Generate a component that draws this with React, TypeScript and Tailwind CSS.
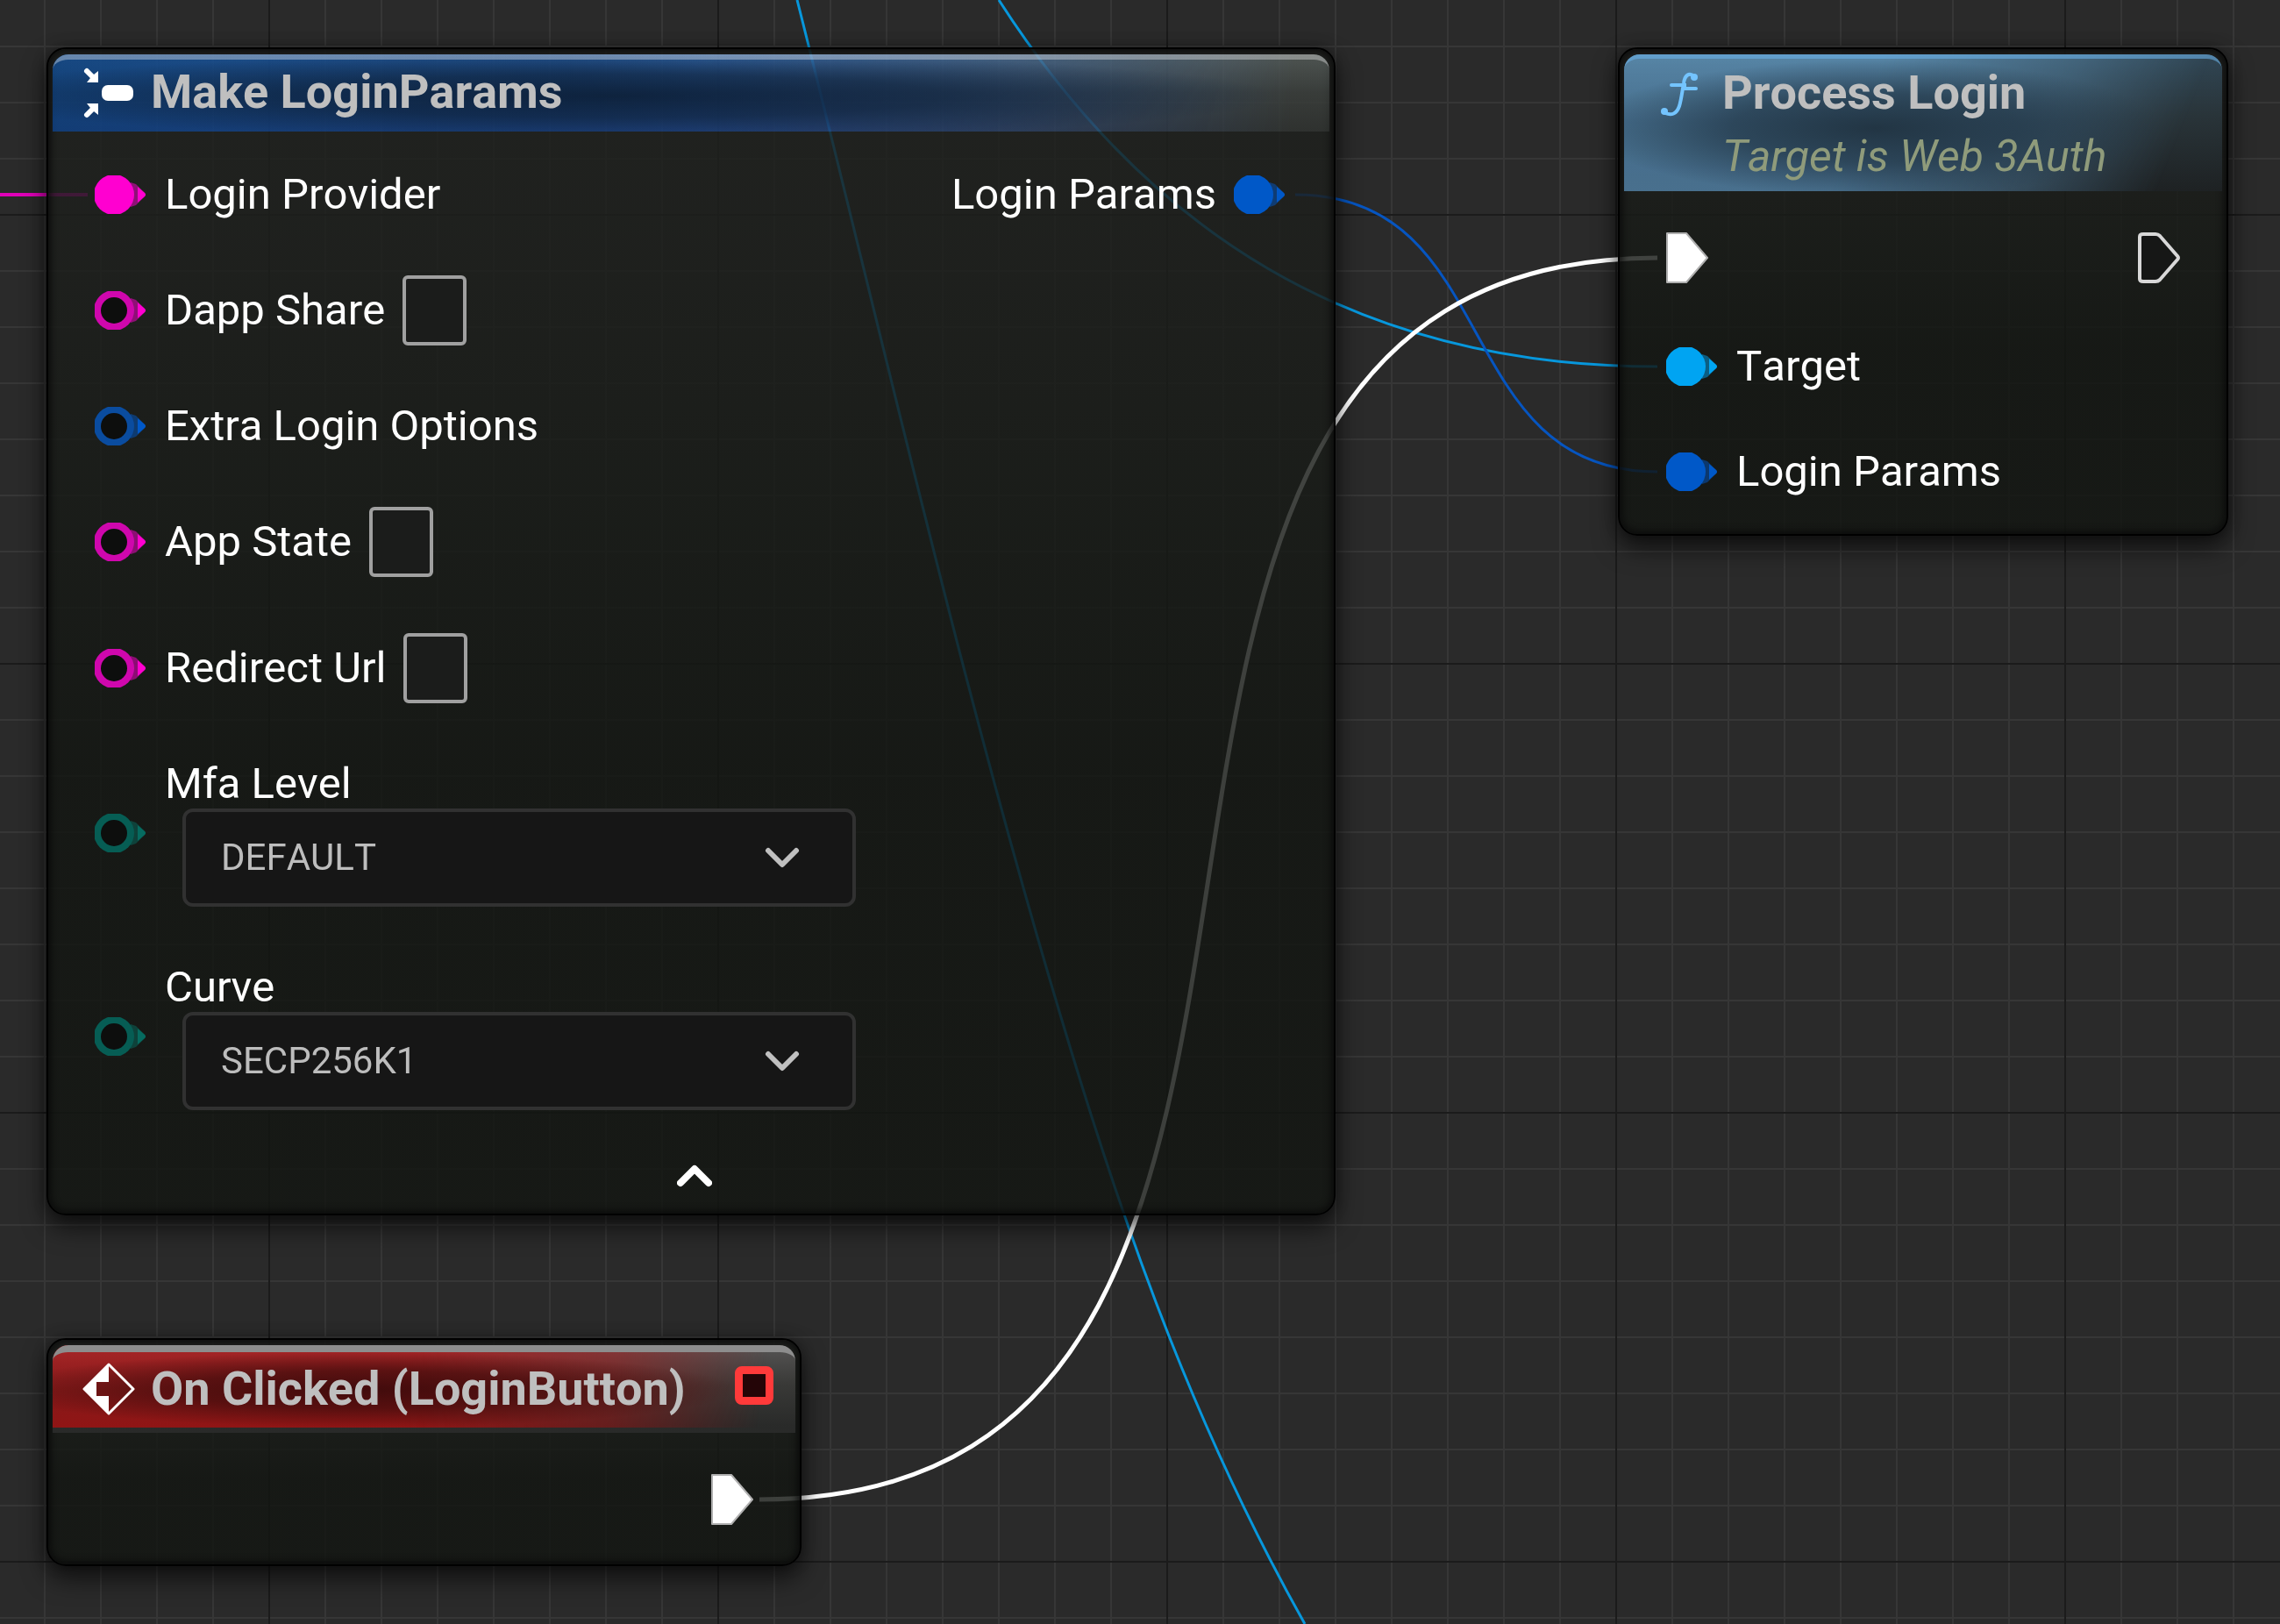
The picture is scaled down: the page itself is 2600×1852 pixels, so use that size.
import React from "react";

type PinColor = "magenta" | "blue" | "cyan" | "teal";

const PIN_HEX: Record<PinColor, string> = {
  magenta: "#ff00d0",
  blue: "#0058c8",
  cyan: "#00a4f2",
  teal: "#066b60",
};

const RING_HEX: Record<PinColor, string> = {
  magenta: "#cf07ad",
  blue: "#0a4c9f",
  cyan: "#008fd6",
  teal: "#065d54",
};

function DataPin({ color, filled = false }: { color: PinColor; filled?: boolean }) {
  const hex = PIN_HEX[color];
  const ring = RING_HEX[color];
  return (
    <svg className="h-11 w-[60px] shrink-0" viewBox="0 0 60 44" aria-hidden="true">
      <path d="M41 8 L47 10 L57 20 Q59 22 57 24 L47 34 L41 36 Z" fill={hex} opacity="0.5" />
      <path d="M49 13 L57 20 Q59 22 57 24 L49 31 Z" fill={hex} />
      {filled ? (
        <circle cx="22" cy="22" r="23" fill={hex} />
      ) : (
        <>
          <circle cx="22" cy="22" r="23" fill={ring} />
          <circle cx="22" cy="22" r="15" fill="#0d0e0d" />
        </>
      )}
    </svg>
  );
}

function ExecPin({ filled = false }: { filled?: boolean }) {
  return (
    <svg className="h-[60px] w-12 shrink-0" viewBox="0 0 48 60" aria-hidden="true">
      {filled ? (
        <path d="M1 2 H23 L47 30 L23 58 H1 Z" fill="#ffffff" stroke="#b0b0b0" strokeWidth="2" strokeLinejoin="round" />
      ) : (
        <path
          d="M2 6 Q2 3 6 3 H20 Q23 3 25 5 L45 28 Q47 30 45 32 L25 55 Q23 57 20 57 H6 Q2 57 2 54 Z"
          fill="#161716"
          stroke="#d8d8d8"
          strokeWidth="4"
        />
      )}
    </svg>
  );
}

function MakeStructIcon() {
  return (
    <svg className="relative h-[60px] w-[60px] shrink-0" viewBox="0 0 60 60" fill="#ffffff" aria-hidden="true">
      <g stroke="#ffffff" strokeWidth="6" strokeLinecap="round">
        <path d="M5 6 L12 13" />
        <path d="M5 56 L12 49" />
      </g>
      <path d="M18 6 V19 H5 L9 14 L13 10 Z" />
      <path d="M18 56 V43 H5 L9 48 L13 52 Z" />
      <rect x="22" y="22" width="36" height="18" rx="7" />
    </svg>
  );
}

function EventIcon() {
  return (
    <svg className="relative h-[60px] w-[60px] shrink-0" viewBox="0 0 60 60" aria-hidden="true">
      <path d="M30 2 L58 30 L30 58 L2 30 Z" fill="none" stroke="#ffffff" strokeWidth="3" strokeLinejoin="round" />
      <path d="M30 2 V22 H16 V38 H30 V58 L2 30 Z" fill="#ffffff" />
    </svg>
  );
}

function FunctionIcon() {
  return (
    <svg className="h-[52px] w-[42px] shrink-0" viewBox="0 0 42 52" aria-hidden="true">
      <g fill="none" stroke="#74c4ff" strokeLinecap="round">
        <path d="M38 5 C32 0 27 4 26 13 C24 24 23 33 21 39 C18 48 12 50 5 47" strokeWidth="4" />
        <path d="M12 15 H27 V19 H40" strokeWidth="4" />
      </g>
      <circle cx="38" cy="6" r="4" fill="#74c4ff" />
      <circle cx="4" cy="45" r="4" fill="#74c4ff" />
    </svg>
  );
}

function Chevron({ className, up = false }: { className: string; up?: boolean }) {
  return (
    <svg className={className} viewBox="0 0 40 26" fill="none" stroke="currentColor" strokeLinecap="round" strokeLinejoin="round" aria-hidden="true">
      <path d={up ? "M4 21 L20 5 L36 21" : "M4 4 L20 20 L36 4"} strokeWidth={up ? 8 : 6} />
    </svg>
  );
}

function NodeFrame({ className, children }: { className: string; children: React.ReactNode }) {
  return (
    <section
      className={`absolute flex flex-col rounded-[22px] border-2 border-black bg-[linear-gradient(to_bottom,rgba(31,33,30,0.83)_0%,rgba(28,30,27,0.82)_17%,rgba(23,26,22,0.82)_38%,rgba(18,21,17,0.82)_62%)] px-[5px] pt-1.5 shadow-[0_14px_28px_rgba(0,0,0,0.6),0_0_16px_rgba(0,0,0,0.3),inset_0_0_7px_4px_rgba(8,8,8,0.7)] ${className}`}
    >
      {children}
    </section>
  );
}

function TextPin({ id, label }: { id: string; label: string }) {
  return (
    <div className="flex h-20 items-center gap-5">
      <DataPin color="magenta" />
      <div className="flex items-center gap-5">
        <label htmlFor={id}>{label}</label>
        <input id={id} type="text" className="h-20 w-[73px] rounded-md border-4 border-[#a0a0a0] bg-[#1b1c1b] px-2 text-[40px] text-[#c0c0c0] outline-none" />
      </div>
    </div>
  );
}

function SelectPin({ id, label, options }: { id: string; label: string; options: string[] }) {
  return (
    <div className="flex items-center gap-5">
      <DataPin color="teal" />
      <div>
        <label htmlFor={id} className="block">
          {label}
        </label>
        <div className="relative ml-5">
          <select
            id={id}
            className="block h-28 w-[768px] appearance-none rounded-xl border-4 border-[#313131] bg-[#161616] pl-10 text-[42px] text-[#bdbdbd] outline-none"
          >
            {options.map((o) => (
              <option key={o}>{o}</option>
            ))}
          </select>
          <Chevron className="pointer-events-none absolute top-11 right-16 h-[26px] w-10 text-[#c0c0c0]" />
        </div>
      </div>
    </div>
  );
}

function MakeLoginParams() {
  return (
    <NodeFrame className="top-[54px] left-[53px] w-[1470px]">
      <header className="relative flex h-[88px] items-center gap-[18px] overflow-hidden rounded-t-[18px] pb-0.5 pl-[34px]">
        <div className="absolute inset-0 bg-[linear-gradient(to_bottom,rgb(46,50,50),rgb(24,26,26)_50%,rgb(15,16,16))] mix-blend-plus-lighter [mask-image:linear-gradient(95deg,transparent_40%,black_92%)]" />
        <div className="absolute inset-0 bg-[linear-gradient(to_bottom,rgb(8,54,118),rgb(0,36,94)_50%,rgb(0,30,92))] mix-blend-plus-lighter [mask-image:linear-gradient(94deg,black_50%,rgba(0,0,0,0.5)_76%,transparent_97%)]" />
        <div className="absolute inset-0 bg-[linear-gradient(to_right,rgba(6,58,112,0.5),transparent_60%)]" />
        <div className="absolute inset-0 bg-[radial-gradient(ellipse_52%_56%_at_44%_54%,rgba(10,26,46,0.8),rgba(12,30,52,0.6)_50%,transparent)]" />
        <div className="absolute inset-0 rounded-t-[18px] border-t-[6px] border-white/35" />
        <MakeStructIcon />
        <h2 className="relative text-[54px] leading-16 font-bold text-[#bfbfbf]">Make LoginParams</h2>
      </header>
      <div className="flex items-start justify-between pt-11 pr-[49px] pl-12">
        <div className="flex flex-col gap-16">
          <div className="flex items-center gap-5">
            <DataPin color="magenta" filled />
            <span>Login Provider</span>
          </div>
          <TextPin id="dapp-share" label="Dapp Share" />
          <div className="flex items-center gap-5">
            <DataPin color="blue" />
            <span>Extra Login Options</span>
          </div>
          <TextPin id="app-state" label="App State" />
          <TextPin id="redirect-url" label="Redirect Url" />
          <SelectPin id="mfa-level" label="Mfa Level" options={["DEFAULT", "OPTIONAL", "MANDATORY", "NONE"]} />
          <SelectPin id="curve" label="Curve" options={["SECP256K1", "ED25519"]} />
        </div>
        <div className="flex items-center gap-5">
          <span>Login Params</span>
          <DataPin color="blue" filled />
        </div>
      </div>
      <button type="button" aria-label="Collapse node" className="mt-[62px] mb-[30px] ml-[712px] self-start">
        <Chevron up className="block h-[26px] w-10 text-white" />
      </button>
    </NodeFrame>
  );
}

function ProcessLogin() {
  return (
    <NodeFrame className="top-[54px] left-[1845px] w-[696px]">
      <header className="relative isolate flex h-[156px] items-start gap-7 overflow-hidden rounded-t-[18px] pt-3 pl-[42px]">
        <div className="absolute inset-0 -z-10 bg-[linear-gradient(to_bottom,rgba(50,74,90,0.9),rgba(42,54,60,0.9)_45%,rgba(30,34,36,0.9))]" />
        <div className="absolute inset-0 -z-10 bg-[linear-gradient(to_bottom,rgba(90,138,172,0.93),rgba(72,114,146,0.93)_50%,rgba(76,118,150,0.93))] [mask-image:linear-gradient(112deg,black_40%,rgba(0,0,0,0.5)_70%,transparent_90%)]" />
        <div className="absolute inset-0 -z-10 bg-[radial-gradient(ellipse_48%_50%_at_42%_54%,rgba(32,50,64,0.95),rgba(34,54,70,0.7)_50%,transparent)]" />
        <div className="absolute inset-0 -z-10 rounded-t-[18px] border-t-[5px] border-[#6bb0e6]/60" />
        <div className="flex h-[68px] items-center">
          <FunctionIcon />
        </div>
        <div>
          <h2 className="text-[54px] leading-16 font-bold text-[#bfbfbf]">Process Login</h2>
          <p className="pt-3 text-[50px] text-[#8f9b7b] italic">Target is Web 3Auth</p>
        </div>
      </header>
      <div className="flex flex-col pt-[46px] pr-12 pb-[43px] pl-12">
        <div className="flex justify-between">
          <ExecPin filled />
          <ExecPin />
        </div>
        <div className="flex items-center gap-5 pt-[66px]">
          <DataPin color="cyan" filled />
          <span>Target</span>
        </div>
        <div className="flex items-center gap-5 pt-16">
          <DataPin color="blue" filled />
          <span>Login Params</span>
        </div>
      </div>
    </NodeFrame>
  );
}

function OnClicked() {
  return (
    <NodeFrame className="top-[1526px] left-[53px] w-[861px]">
      <header className="relative isolate flex h-[100px] items-center gap-[18px] overflow-hidden rounded-t-[18px] pl-[34px]">
        <div className="absolute inset-0 -z-10 bg-[linear-gradient(to_bottom,rgba(92,90,90,0.9),rgba(60,60,58,0.9)_45%,rgba(42,43,42,0.95)_92%)]" />
        <div className="absolute inset-x-0 top-0 bottom-1.5 -z-10 bg-[linear-gradient(to_bottom,rgba(172,36,38,0.95),rgba(140,24,24,0.95)_55%,rgba(150,20,20,0.95))] [mask-image:linear-gradient(98deg,black_48%,rgba(0,0,0,0.6)_75%,transparent_95%)]" />
        <div className="absolute inset-x-0 top-0 bottom-1.5 -z-10 bg-[radial-gradient(ellipse_50%_46%_at_42%_54%,rgba(60,10,11,0.92),rgba(66,12,12,0.7)_50%,transparent)]" />
        <div className="absolute inset-0 -z-10 rounded-t-[18px] border-t-8 border-[#8d8d8d]" />
        <EventIcon />
        <h2 className="text-[54px] leading-16 font-bold text-[#bfbfbf]">On Clicked (LoginButton)</h2>
        <span className="absolute top-6 right-[25px] h-11 w-11 rounded-lg border-[9px] border-[#ff3a3a] bg-[#240507]" />
      </header>
      <div className="flex justify-end pt-[46px] pr-12 pb-11">
        <ExecPin filled />
      </div>
    </NodeFrame>
  );
}

function Wires() {
  return (
    <svg className="pointer-events-none absolute top-0 left-0 h-[1852px] w-[2600px]" viewBox="0 0 2600 1852" fill="none" aria-hidden="true">
      <path d="M0 222 H100" stroke="#e000b8" strokeWidth="4" />
      <path d="M909 0 C1010 400 1100 800 1222 1200 C1288 1417 1366 1635 1488 1852" stroke="#0797dc" strokeWidth="3" />
      <path d="M1139 0 C1306 260 1541 418 1890 418" stroke="#0797dc" strokeWidth="3" />
      <path d="M1477 222 C1716 222 1651 538 1890 538" stroke="#0655c0" strokeWidth="3" />
      <path d="M866 1710 C1672 1710 1084 294 1890 294" stroke="#ffffff" strokeWidth="5" />
    </svg>
  );
}

export default function App() {
  return (
    <main className="relative min-h-screen w-full overflow-hidden bg-[#2a2a2a] bg-[linear-gradient(to_right,#1b1b1b_2px,transparent_2px),linear-gradient(to_bottom,#1b1b1b_2px,transparent_2px),linear-gradient(to_right,#363636_2px,transparent_2px),linear-gradient(to_bottom,#363636_2px,transparent_2px)] bg-[length:512px_512px,512px_512px,64px_64px,64px_64px] bg-[position:306px_0px,0px_244px,50px_0px,0px_52px] font-['Roboto',sans-serif] text-[49px] leading-14 text-white [font-kerning:none]">
      <Wires />
      <MakeLoginParams />
      <ProcessLogin />
      <OnClicked />
    </main>
  );
}
